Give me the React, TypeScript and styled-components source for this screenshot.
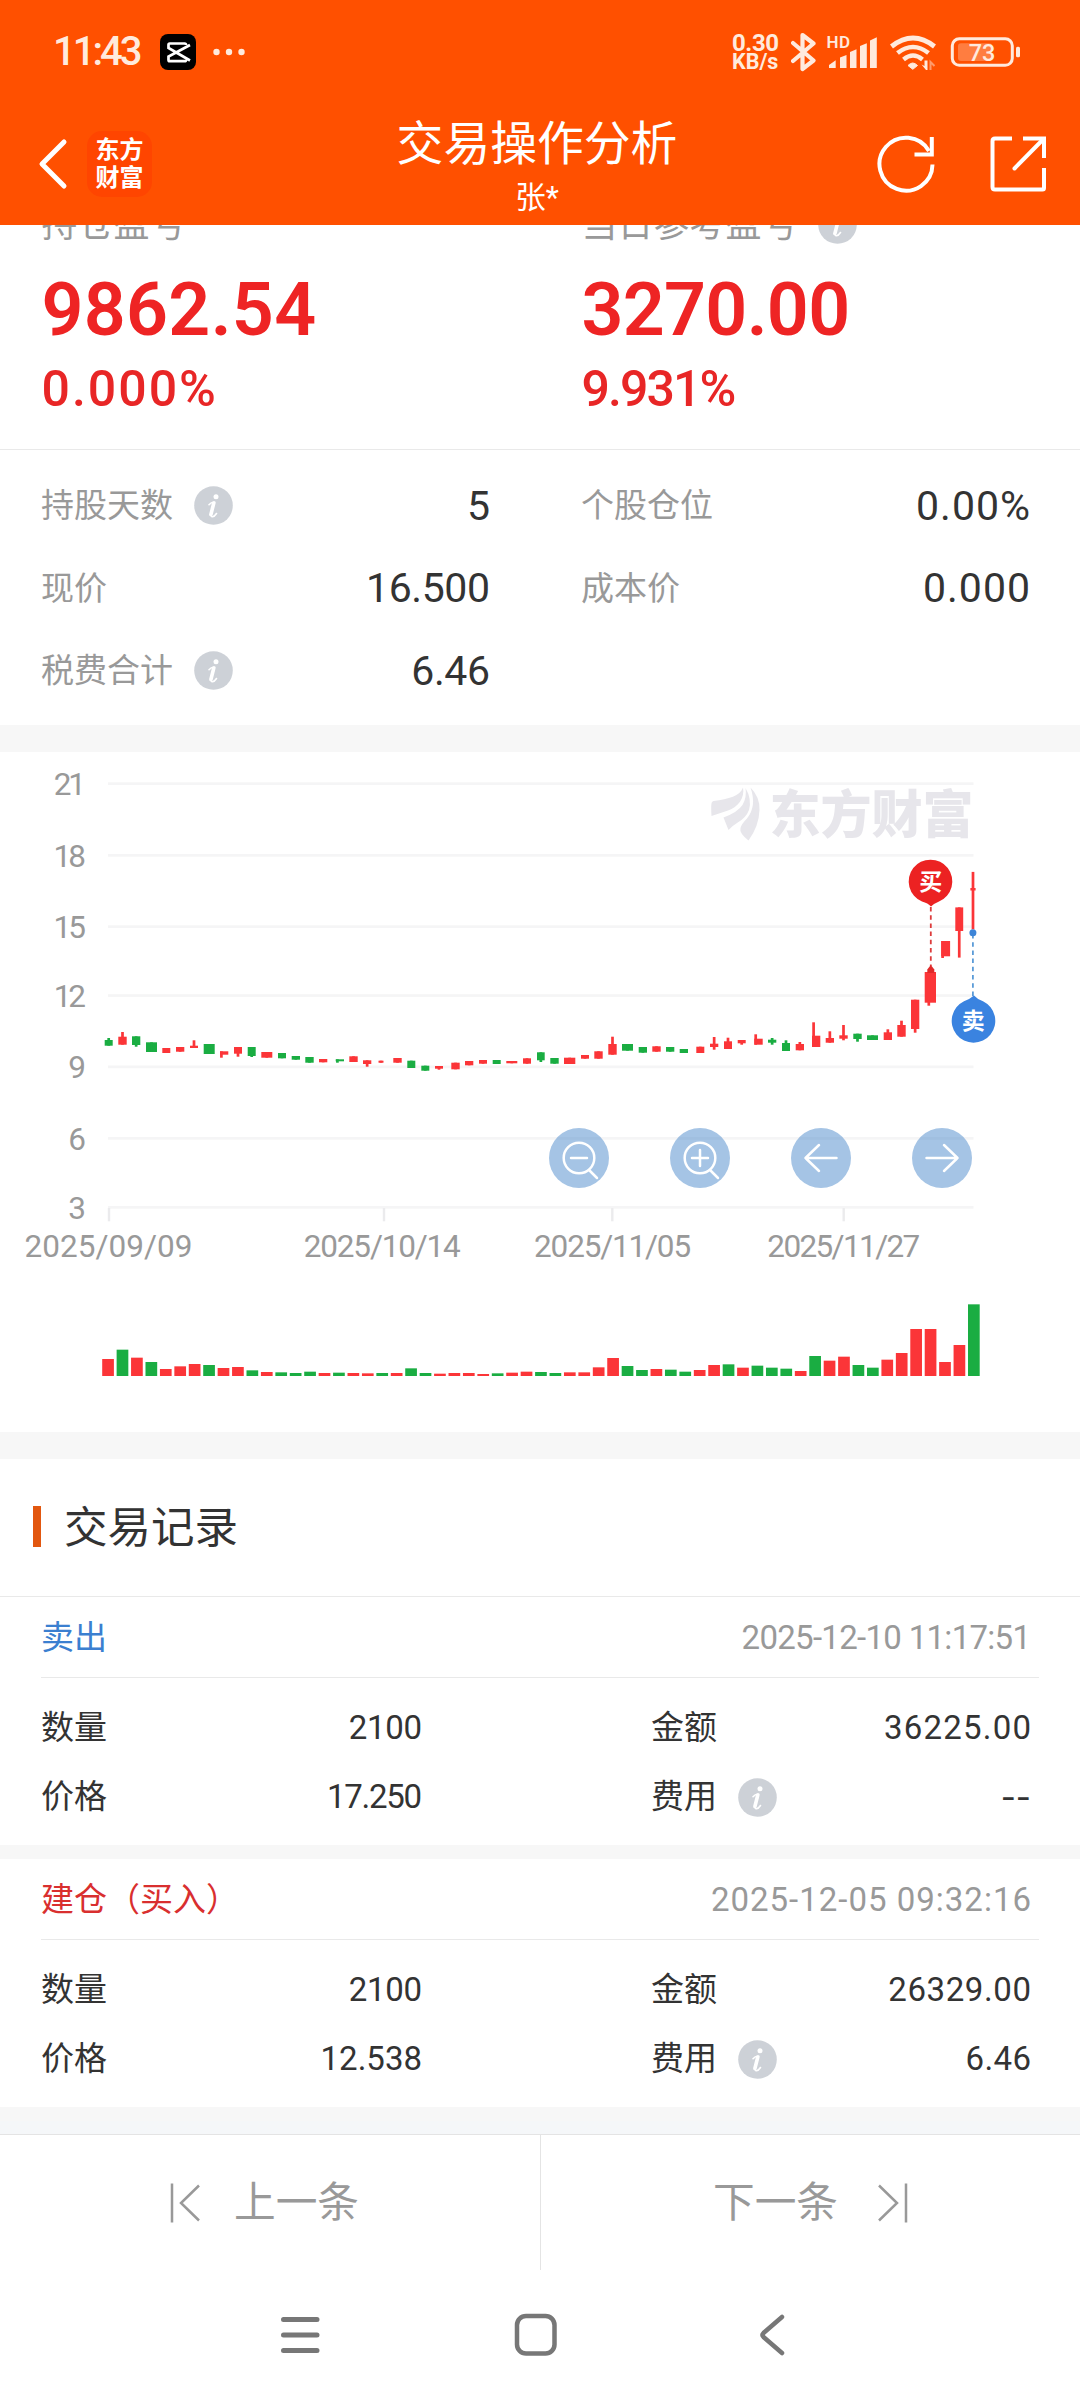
import React from 'react';
import styled, { createGlobalStyle } from 'styled-components';

const FONT = `Roboto, "Noto Sans CJK SC", sans-serif`;
const RED = '#fb3538';
const GREEN = '#1aad42';

const GlobalStyle = createGlobalStyle`
  body { margin: 0; background: #fff; }
  * { box-sizing: border-box; }
`;

const Screen = styled.div`
  width: 1080px;
  height: 2400px;
  overflow: hidden;
  display: flex;
  flex-direction: column;
  background: #fff;
  color: #333;
  font-family: ${FONT};
`;

/* ---------- header ---------- */

const Header = styled.header`
  height: 225px;
  flex: none;
  background: #ff5000;
  color: #fff;
`;

const StatusBar = styled.div`
  height: 104px;
  padding: 0 59px 0 53px;
  display: flex;
  align-items: center;
  color: #ffeadd;
`;

const Clock = styled.span`
  width: 107px;
  font-size: 40px;
  font-weight: 500;
  line-height: 48px;
  letter-spacing: -3px;
`;

const StatusRight = styled.div`
  margin-left: auto;
  display: flex;
  align-items: center;
`;

const NetSpeed = styled.div`
  width: 59px;
  display: flex;
  flex-direction: column;
  font-weight: 700;
  font-size: 21.5px;
  line-height: 18px;
`;

const SpeedValue = styled.span`
  font-size: 24px;
  line-height: 19px;
  letter-spacing: -0.4px;
`;

const TitleBar = styled.div`
  height: 121px;
  display: grid;
  grid-template-columns: 300px 474px 1fr;
`;

const TitleLeft = styled.div`
  display: flex;
  align-items: center;
  padding: 0 0 1px 36px;
`;

const BrandTile = styled.div`
  width: 65px;
  height: 66px;
  margin-left: 17px;
  border-radius: 15px;
  background: #ff4500;
  display: flex;
  flex-direction: column;
  align-items: center;
  justify-content: center;
  font-size: 24px;
  font-weight: 700;
  line-height: 28px;
`;

const TitleCenter = styled.div`
  display: flex;
  flex-direction: column;
  align-items: center;
  padding-top: 9px;
`;

const Title = styled.h1`
  margin: 0;
  font-size: 46.8px;
  font-weight: 400;
  line-height: 62px;
`;

const Subtitle = styled.div`
  font-size: 30.5px;
  line-height: 45px;
`;

const TitleRight = styled.div`
  display: flex;
  align-items: center;
  gap: 51px;
  padding: 0 0 1px 102px;
`;

/* ---------- shared ---------- */

const Band = styled.div<{ $h: number; $cool?: boolean }>`
  height: ${p => p.$h}px;
  flex: none;
  background: ${p => (p.$cool ? 'linear-gradient(#f7f7f7 50%, #f5f7f9 50%)' : '#f7f7f7')};
`;

const InfoSvg = styled.svg`
  width: 39px;
  height: 39px;
  margin-left: 20.5px;
  flex: none;
`;

const InfoDot = () => (
  <InfoSvg viewBox="0 0 39 39">
    <circle cx="19.500" cy="19.500" r="19.300" fill="#cdd1d7" />
    <circle cx="22" cy="10.800" r="2.500" fill="#fff" />
    <path d="M15 18.700Q17.500 15.800 20.500 16.300L17.300 27.500Q16.600 31 18.500 30.800 20.500 30.500 22.500 27.500" fill="none" stroke="#fff" strokeWidth="1.600" strokeLinecap="round" />
    <path d="M19.800 17 16.900 28.500" stroke="#fff" strokeWidth="3.600" strokeLinecap="round" />
  </InfoSvg>
);

const Num = styled.span<{ $track?: number }>`
  letter-spacing: ${p => p.$track ?? 0}px;
  margin-right: ${p => -(p.$track ?? 0)}px;
`;

/* ---------- profit ---------- */

const ProfitSection = styled.section`
  height: 225px;
  flex: none;
  overflow: hidden;
  display: grid;
  grid-template-columns: 1fr 1fr;
  border-bottom: 1px solid #e9e9e9;
`;

const ProfitCell = styled.div`
  display: flex;
  flex-direction: column;
  margin-top: -28px;
  padding-left: 41.5px;
  color: #e82626;
`;

const ProfitLabel = styled.div`
  height: 54px;
  display: flex;
  align-items: center;
  font-size: 36px;
  line-height: 54px;
  color: #999;
`;

const LabelText = styled.span`
  padding-top: 2px;
`;

const ProfitValue = styled.div<{ $track: number }>`
  margin-top: 15px;
  font-size: 73.5px;
  font-weight: 600;
  line-height: 88px;
  color: #ee2424;
  letter-spacing: ${p => p.$track}px;
`;

const ProfitRate = styled.div<{ $track: number }>`
  margin-top: 4.5px;
  font-size: 50px;
  font-weight: 500;
  line-height: 60px;
  letter-spacing: ${p => p.$track}px;
`;

/* ---------- stats ---------- */

const StatsGrid = styled.section`
  height: 275px;
  flex: none;
  padding-top: 14px;
  display: grid;
  grid-template-columns: 1fr 1fr;
  grid-auto-rows: 82.5px;
`;

const StatCell = styled.div`
  display: flex;
  align-items: center;
  padding: 0 50px 0 41px;
`;

const StatLabel = styled.span`
  font-size: 33px;
  line-height: 40px;
  padding-top: 2px;
  color: #999;
`;

const StatValue = styled(Num)`
  margin-left: auto;
  font-size: 41px;
  line-height: 50px;
  padding-top: 1px;
`;

/* ---------- chart ---------- */

const ChartSection = styled.section`
  height: 680px;
  flex: none;
  position: relative;
`;

const ChartTools = styled.div`
  position: absolute;
  left: 549px;
  top: 376px;
  display: flex;
  gap: 61px;
`;

const ToolButton = styled.button`
  width: 60px;
  height: 60px;
  padding: 0;
  border: 0;
  border-radius: 50%;
  background: rgba(58, 126, 198, 0.46);
  display: flex;
  align-items: center;
  justify-content: center;
`;

/* ---------- records ---------- */

const RecordsTitle = styled.div`
  height: 138px;
  flex: none;
  padding: 0 0 2px 33px;
  display: flex;
  align-items: center;
  border-bottom: 1px solid #e9e9e9;
  font-size: 43.5px;
  line-height: 56px;
  &::before {
    content: '';
    width: 8px;
    height: 41px;
    margin-right: 23px;
    background: #e2570f;
  }
`;

const RecordsTitleText = styled.span`
  padding-top: 4px;
`;

const RecordHead = styled.div<{ $color: string }>`
  height: 81px;
  margin: 0 41px;
  padding: 2px 8px 0 0;
  display: flex;
  align-items: center;
  justify-content: space-between;
  border-bottom: 1px solid #e9e9e9;
  font-size: 33px;
  line-height: 44px;
  color: ${p => p.$color};
`;

const RecordTime = styled(Num)`
  color: #999;
`;

const RecordBody = styled.div`
  height: 167px;
  padding: 15.5px 49px 0 41px;
  display: grid;
  grid-template-columns: 381px 380px;
  grid-auto-rows: 69px;
  justify-content: space-between;
`;

const RecordCell = styled.div`
  display: flex;
  align-items: center;
  font-size: 33px;
  line-height: 44px;
`;

const RecordValue = styled(Num)<{ $wide?: boolean }>`
  margin-left: auto;
  font-family: ${p => (p.$wide ? 'Inter, sans-serif' : 'inherit')};
`;

/* ---------- footer ---------- */

const Pager = styled.div`
  height: 136px;
  flex: none;
  display: grid;
  grid-template-columns: 1fr 1fr;
  border-top: 1px solid #e4e4e4;
`;

const PagerButton = styled.div<{ $next?: boolean }>`
  display: flex;
  align-items: center;
  gap: ${p => (p.$next ? 38 : 32)}px;
  padding-left: ${p => (p.$next ? 172 : 170)}px;
  border-left: ${p => (p.$next ? '1px solid #e4e4e4' : '0')};
  font-size: 41.7px;
  line-height: 54px;
  color: #999;
`;

const SystemNav = styled.nav`
  flex: 1;
  display: flex;
  align-items: flex-start;
  gap: 193px;
  padding: 43px 0 0 279px;
`;

/* ---------- icons ---------- */

const CapCutIcon = () => (
  <svg width="36" height="36" viewBox="0 0 36 36">
    <rect width="36" height="36" rx="8" fill="#000" />
    <path d="M30 11 8.5 22.5V26q0 1.2 1.2 1.2h15q1.3 0 1.3-1.5M30 26.500 8.500 14V10.800q0-1.300 1.200-1.300h15q1.300 0 1.300 1.500" fill="none" stroke="#fff" strokeWidth="2.700" />
  </svg>
);

const DotsSvg = styled.svg`
  margin-left: 17px;
`;

const MoreDots = () => (
  <DotsSvg width="32" height="8" viewBox="0 0 32 8">
    {[3.5, 16, 28.5].map(x => <circle key={x} cx={x} cy="4" r="3.200" fill="#ffeadd" />)}
  </DotsSvg>
);

const StatusIcons = () => (
  <svg width="230" height="44" viewBox="791 30 230 44" fill="none" stroke="#ffeadd">
    <path d="M793 43 813.500 60.500 802.500 69V35L813.500 43.500 793 61" strokeWidth="4.200" strokeLinejoin="round" strokeLinecap="round" />
    <g fill="#ffeadd" stroke="none">
      <text x="826.500" y="48" fontFamily="Roboto, sans-serif" fontSize="17" fontWeight="600" textLength="23.500">HD</text>
      <path d="M829 68V65L835.700 60.300V68z" />
      <path d="M840 68V57.500L846.500 55V68z" />
      <path d="M850 68V52L856.500 49.300V68z" />
      <path d="M860 68V46L866.800 43.300V68z" />
      <path d="M870 68V40.500L876.800 37.300V68z" />
      <path d="M908 65.500Q912.700 60.500 917.500 65.500L912.800 69.300z" strokeWidth="1" stroke="#ffeadd" />
      <path d="M921.500 64.500 924.500 66V60.500H927.500V70H926z" />
    </g>
    <path d="M891.500 46.500Q913 29.500 934.500 46.500" strokeWidth="4.800" />
    <path d="M897.500 53Q913 41 928.500 53" strokeWidth="4.600" />
    <path d="M903.500 59.500Q913 51.500 922.500 59.500" strokeWidth="4.400" />
    <path d="M930.500 70V62L934.500 66" strokeWidth="2" stroke="#ff9a6b" />
    <rect x="952.300" y="38.800" width="60" height="26.500" rx="7" strokeWidth="3" />
    <rect x="958" y="43.300" width="34" height="17.700" rx="3" fill="#ff7d40" stroke="none" />
    <rect x="1016" y="46.700" width="4" height="10.500" rx="1.500" fill="#ffeadd" stroke="none" />
    <text x="982" y="61.300" textAnchor="middle" fontFamily="Roboto, sans-serif" fontSize="23.500" fontWeight="500" fill="#ffeadd" stroke="none">73</text>
  </svg>
);

const BackIcon = () => (
  <svg width="34" height="52" viewBox="0 0 34 52">
    <path d="M28 4 6 26 28 48" fill="none" stroke="#fff" strokeWidth="5" strokeLinecap="round" strokeLinejoin="round" />
  </svg>
);

const RefreshIcon = () => (
  <svg width="62" height="62" viewBox="0 0 62 62" fill="none" stroke="#fff" strokeWidth="4">
    <path d="M56.500 31.500A26.500 26.500 0 1 1 53 18" />
    <path d="M55.800 4V21.500H38.500" />
  </svg>
);

const ShareIcon = () => (
  <svg width="58" height="58" viewBox="0 0 58 58" fill="none" stroke="#fff" strokeWidth="4" strokeLinejoin="round">
    <path d="M23 3.500H6Q3.500 3.500 3.500 6V52Q3.500 54.500 6 54.500H53.500Q55 54.500 55 53V33" />
    <path d="M34 3.500H55V23" strokeLinejoin="miter" />
    <path d="M54 4.500 25.500 33.500" strokeLinecap="round" />
  </svg>
);

/* ---------- chart data ---------- */

// [direction, left, right, top, bottom, high?, low?, wick x?]
type Candle = ['r' | 'g', number, number, number, number, number?, number?, number?];

const CANDLES: Candle[] = [
  ['g', 104.7, 112.7, 1040, 1045.7, 1038],
  ['r', 118.3, 126.7, 1036.7, 1044.7, 1032],
  ['g', 132, 140.3, 1036.3, 1045, 0, 1046.7],
  ['g', 146, 157, 1042.3, 1052],
  ['r', 162.3, 170.3, 1048, 1053],
  ['r', 176, 184.3, 1047, 1051.7],
  ['r', 190, 198, 1045.7, 1048, 1040.3],
  ['g', 203.7, 214.7, 1044, 1054],
  ['r', 220, 228.3, 1051.3, 1054.7, 0, 1057.7, 221.4],
  ['r', 234, 242, 1047, 1053.7, 0, 1056.7],
  ['g', 247.7, 255.7, 1047, 1056, 0, 1057],
  ['r', 261.3, 272.3, 1052, 1057.7],
  ['g', 278, 286, 1053, 1058.3],
  ['g', 291.7, 300, 1056, 1059.7],
  ['g', 305.3, 313.7, 1057, 1062.7],
  ['r', 319, 327.3, 1059, 1062.3],
  ['g', 335.7, 344, 1059.3, 1061.3, 0, 1062.7, 337.4],
  ['r', 349.3, 357.7, 1056.3, 1062],
  ['r', 363, 371.3, 1060.3, 1064, 0, 1066.7],
  ['r', 378.5, 383.5, 1060.7, 1062.7],
  ['r', 393.3, 401.7, 1058, 1062.7],
  ['g', 407.3, 415.3, 1060.7, 1068],
  ['g', 421.3, 429.3, 1065.7, 1070.7],
  ['r', 435, 443, 1066, 1068.7, 0, 1069.7],
  ['r', 451.3, 459.7, 1062.7, 1069.3],
  ['r', 465, 473.3, 1061, 1065.3],
  ['r', 479, 487, 1060, 1063.7],
  ['g', 492.7, 500.7, 1060, 1064],
  ['r', 506.3, 517.3, 1061, 1063.3],
  ['r', 523, 531, 1058.3, 1063.7],
  ['g', 537, 544.7, 1052.3, 1060.3, 0, 1062],
  ['g', 550.3, 558.7, 1058, 1063.7],
  ['r', 564, 575.3, 1057.7, 1064],
  ['r', 581, 589, 1055, 1058.7],
  ['r', 594.3, 602.7, 1051.3, 1058.7],
  ['r', 608.3, 616.7, 1044, 1054.7, 1036.7],
  ['g', 622, 633, 1044, 1050.7],
  ['g', 638.7, 647, 1047, 1052.7],
  ['r', 652.3, 660.7, 1046.3, 1051.7],
  ['g', 666, 674.3, 1047, 1051.7],
  ['g', 679.7, 688, 1049, 1053],
  ['r', 696.3, 704.3, 1046.7, 1053],
  ['r', 710, 718.3, 1043.7, 1047, 1037, 1049.7],
  ['r', 724, 732, 1041.3, 1049, 1037.7],
  ['r', 737.7, 745.7, 1040, 1043.3, 0, 1044.7],
  ['r', 754.3, 762.7, 1038.7, 1044.7, 1034.3, 0, 755.7],
  ['g', 768, 776.3, 1039.7, 1042.7, 1038, 1044.7],
  ['g', 782, 790, 1043, 1051, 1040.3],
  ['r', 795.7, 804, 1044, 1050.3, 1042],
  ['r', 812, 820.3, 1035.7, 1047, 1022.3, 0, 813.6],
  ['r', 825.7, 834, 1038, 1042.7, 1031.3],
  ['r', 839.3, 847.7, 1035.3, 1038.7, 1025, 1040.3],
  ['g', 853.3, 861.7, 1033.7, 1039, 0, 1041.7],
  ['g', 867, 878, 1035.3, 1040],
  ['r', 883.7, 892, 1032.3, 1040, 1029.3],
  ['r', 897.3, 905.7, 1025, 1036.7, 1020.7],
  ['r', 911, 919.3, 999.7, 1029, 0, 1032.7],
  ['r', 924.7, 936, 972, 1002.7, 0, 1005.7, 928.8],
  ['r', 941.2, 950.1, 941, 956.3, 0, 958, 942.6],
  ['r', 955.3, 963.2, 907.4, 931, 0, 957.6],
  ['r', 970.4, 975.6, 888, 890.5, 871.9, 929.4],
];

const VOLUMES =
  'r51 g79 r55 g42 r21 r29 r36 g33 r24 r27 g17 r12 g11 g9 g13 r9 g10 r9 r8 g9 r9 g23 g9 r7 r9 r9 r6 g8 r10 r13 g12 g9 r11 r11 r26 r54 g30 g18 r21 g19 g13 r18 r33 g35 r25 g31 g25 g22 r15 g60 r46 r58 g33 g25 r49 r69 r141 r141 r42 r93 g215'.split(' ');

const PRICE_AXIS = [
  { label: '21', y: 782.3, track: -3.2 },
  { label: '18', y: 854, track: -3 },
  { label: '15', y: 925.3, track: -3 },
  { label: '12', y: 994.2, track: -3.2 },
  { label: '9', y: 1065.5, track: 0 },
  { label: '6', y: 1137, track: 0 },
  { label: '3', y: 1206, track: 0 },
];

const DATE_AXIS = [
  { label: '2025/09/09', x: 109, text: 108.5, len: 168 },
  { label: '2025/10/14', x: 384, text: 382.3, len: 157 },
  { label: '2025/11/05', x: 612.3, text: 612.6, len: 157 },
  { label: '2025/11/27', x: 843.7, text: 843.8, len: 153 },
];

const color = (c: string) => (c === 'r' ? RED : GREEN);

const Chart = () => (
  <svg width="1080" height="680" viewBox="0 752 1080 680" fontFamily={FONT}>
    {PRICE_AXIS.map(a => (
      <g key={a.label}>
        <rect x="108" y={a.y} width="865.500" height="2.700" fill="#f5f5f6" />
        <text x={86 + a.track} y={a.y + 12.5} textAnchor="end" fontSize="31.500" fill="#999" letterSpacing={a.track}>{a.label}</text>
      </g>
    ))}
    {DATE_AXIS.map(d => (
      <g key={d.label}>
        <rect x={d.x - 1.2} y="1208" width="2.400" height="13.300" fill="#ebebed" />
        <text x={d.text} y="1256.500" textAnchor="middle" fontSize="31.500" fill="#999" textLength={d.len}>{d.label}</text>
      </g>
    ))}
    <g fill="#e7e6eb">
      <path d="M711.500 816C711 804 711 802 713.500 801 729 799 740 796 743 787.500 745 798 738 807 728 810.500Q719 813.500 711.500 816z" />
      <path d="M723.500 817.500Q738 812 742.500 805 747 797 745.500 788 752 799 749 810 746 818 737 823 732 826 728.500 830z" />
      <path d="M750.500 787.500Q760 797 759.500 810 759 826 748.500 840.500 739 833 740.500 828 741.500 824 747 818.500 757 806 750.500 787.500z" />
      <text x="769.500" y="832.500" fontSize="51" fontWeight="900">东方财富</text>
    </g>
    {CANDLES.map(([c, l, r, t, b, hi, lo, wx], i) => {
      const x = wx ?? (l + r) / 2;
      const top = hi || t;
      return (
        <g key={i} fill={color(c)}>
          <rect x={l} y={t} width={r - l} height={b - t} />
          <rect x={x - 1.35} y={top} width="2.700" height={(lo || b) - top} />
        </g>
      );
    })}
    {VOLUMES.map((v, i) => {
      const h = Number(v.slice(1)) / 3;
      return <rect key={i} x={102.2 + i * 14.43} y={1376 - h} width="11.700" height={h} fill={color(v[0])} />;
    })}
    <g fill="none" strokeWidth="1.800" strokeDasharray="4.500 3.700">
      <path d="M930.800 907V966" stroke="#dd3c3c" />
      <path d="M972.900 934V996" stroke="#5b9bd8" />
    </g>
    <path d="M930.800 965 934.300 969.500V973H927.300V969.500z" fill="#e02a2a" />
    <circle cx="972.900" cy="932.800" r="3.500" fill="#3d85d8" />
    <path d="M931 906.500Q928 903 922 901.500A21.800 21.800 0 1 1 939 901.500Q934 903.500 931 906.500z" fill="#ec2222" />
    <path d="M974 995.500Q977 999 983 1001.300A21.800 21.800 0 1 1 964 1001.300Q970 999 974 995.500z" fill="#3a83e0" />
    <g fill="#fff" fontSize="23" fontWeight="700" textAnchor="middle">
      <text x="930.800" y="890">买</text>
      <text x="973.300" y="1029">卖</text>
    </g>
  </svg>
);

const TOOL_PATHS = [
  'M22 30H38M40.500 42.500 48 50M30 14.700A15.300 15.300 0 1 0 30 45.300 15.300 15.300 0 1 0 30 14.700',
  'M22 30H38M30 22V38M40.500 42.500 48 50M30 14.700A15.300 15.300 0 1 0 30 45.300 15.300 15.300 0 1 0 30 14.700',
  'M45.500 30H14.500M28 17 14.500 30 28 43',
  'M14.500 30H45.500M32 17 45.500 30 32 43',
];

/* ---------- composed parts ---------- */

type RecordProps = {
  kind: string; kindColor: string; time: string; timeTrack: number;
  price: string; priceTrack: number; amount: string; amountTrack: number; fee: string; feeTrack: number;
};

const TradeRecord = (r: RecordProps) => (
  <article>
    <RecordHead $color={r.kindColor}>
      <span>{r.kind}</span>
      <RecordTime $track={r.timeTrack}>{r.time}</RecordTime>
    </RecordHead>
    <RecordBody>
      <RecordCell>数量<RecordValue $track={-0.3}>2100</RecordValue></RecordCell>
      <RecordCell>金额<RecordValue $track={r.amountTrack}>{r.amount}</RecordValue></RecordCell>
      <RecordCell>价格<RecordValue $track={r.priceTrack}>{r.price}</RecordValue></RecordCell>
      <RecordCell>费用<InfoDot /><RecordValue $track={r.feeTrack} $wide={r.fee === '--'}>{r.fee}</RecordValue></RecordCell>
    </RecordBody>
  </article>
);

export default function App() {
  return (
    <Screen>
      <GlobalStyle />
      <Header>
        <StatusBar>
          <Clock>11:43</Clock>
          <CapCutIcon />
          <MoreDots />
          <StatusRight>
            <NetSpeed><SpeedValue>0.30</SpeedValue>KB/s</NetSpeed>
            <StatusIcons />
          </StatusRight>
        </StatusBar>
        <TitleBar>
          <TitleLeft>
            <BackIcon />
            <BrandTile><span>东方</span><span>财富</span></BrandTile>
          </TitleLeft>
          <TitleCenter>
            <Title>交易操作分析</Title>
            <Subtitle>张*</Subtitle>
          </TitleCenter>
          <TitleRight>
            <RefreshIcon />
            <ShareIcon />
          </TitleRight>
        </TitleBar>
      </Header>

      <ProfitSection>
        <ProfitCell>
          <ProfitLabel><LabelText>持仓盈亏</LabelText></ProfitLabel>
          <ProfitValue $track={0.3}>9862.54</ProfitValue>
          <ProfitRate $track={2}>0.000%</ProfitRate>
        </ProfitCell>
        <ProfitCell>
          <ProfitLabel><LabelText>当日参考盈亏</LabelText><InfoDot /></ProfitLabel>
          <ProfitValue $track={-0.7}>3270.00</ProfitValue>
          <ProfitRate $track={-1.9}>9.931%</ProfitRate>
        </ProfitCell>
      </ProfitSection>

      <StatsGrid>
        <StatCell><StatLabel>持股天数</StatLabel><InfoDot /><StatValue>5</StatValue></StatCell>
        <StatCell><StatLabel>个股仓位</StatLabel><StatValue $track={1}>0.00%</StatValue></StatCell>
        <StatCell><StatLabel>现价</StatLabel><StatValue $track={-0.4}>16.500</StatValue></StatCell>
        <StatCell><StatLabel>成本价</StatLabel><StatValue $track={1}>0.000</StatValue></StatCell>
        <StatCell><StatLabel>税费合计</StatLabel><InfoDot /><StatValue $track={-0.4}>6.46</StatValue></StatCell>
      </StatsGrid>
      <Band $h={27} />

      <ChartSection>
        <Chart />
        <ChartTools>
          {TOOL_PATHS.map(d => (
            <ToolButton key={d}>
              <svg width="60" height="60" viewBox="0 0 60 60" fill="none" stroke="#fff" strokeWidth="2.500" strokeLinecap="round" strokeLinejoin="round">
                <path d={d} />
              </svg>
            </ToolButton>
          ))}
        </ChartTools>
      </ChartSection>
      <Band $h={27} />

      <RecordsTitle><RecordsTitleText>交易记录</RecordsTitleText></RecordsTitle>
      <TradeRecord
        kind="卖出" kindColor="#3b7fd0" time="2025-12-10 11:17:51" timeTrack={-0.7}
        price="17.250" priceTrack={-1.3} amount="36225.00" amountTrack={1.2} fee="--" feeTrack={0}
      />
      <Band $h={14} />
      <TradeRecord
        kind="建仓（买入）" kindColor="#d92f2f" time="2025-12-05 09:32:16" timeTrack={1}
        price="12.538" priceTrack={0} amount="26329.00" amountTrack={0.6} fee="6.46" feeTrack={0.4}
      />
      <Band $h={27} $cool />

      <Pager>
        <PagerButton>
          <svg width="32" height="42" viewBox="0 0 32 42" fill="none" stroke="#999" strokeWidth="2.500">
            <path d="M2 1.500V40.500M29 3.500 11 21 29 38.500" />
          </svg>
          上一条
        </PagerButton>
        <PagerButton $next>
          下一条
          <svg width="32" height="42" viewBox="0 0 32 42" fill="none" stroke="#999" strokeWidth="2.500">
            <path d="M30 1.500V40.500M3 3.500 21 21 3 38.500" />
          </svg>
        </PagerButton>
      </Pager>

      <SystemNav>
        <svg width="42" height="44" viewBox="0 0 42 44" stroke="#777" strokeWidth="5" strokeLinecap="round">
          <path d="M4.500 6.500H38M4.500 22H38M4.500 37.500H38" />
        </svg>
        <svg width="44" height="44" viewBox="0 0 44 44" fill="none" stroke="#777" strokeWidth="4.500">
          <rect x="3" y="3" width="37.500" height="37.500" rx="9" />
        </svg>
        <svg width="36" height="44" viewBox="0 0 36 44" fill="none" stroke="#777" strokeWidth="4.500" strokeLinecap="round">
          <path d="M31 4 12.500 20Q10.500 22 12.500 24L31 40" />
        </svg>
      </SystemNav>
    </Screen>
  );
}
